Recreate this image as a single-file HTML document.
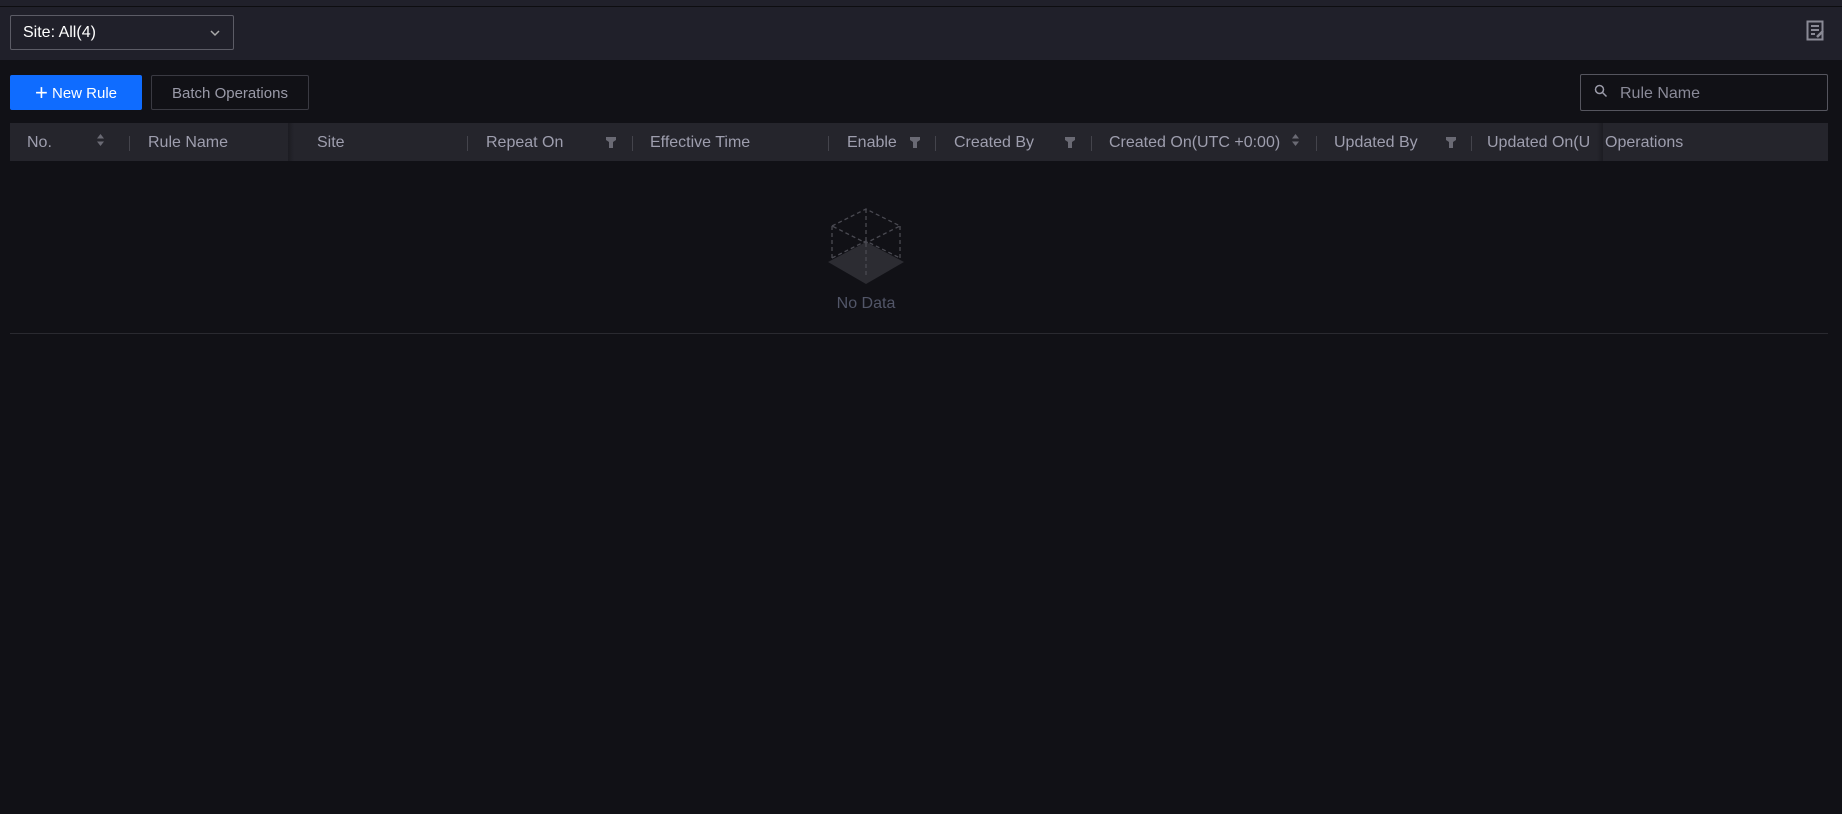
<!DOCTYPE html>
<html><head><meta charset="utf-8"><style>
*{box-sizing:border-box;margin:0;padding:0}
body{width:1842px;height:814px;background:#111116;font-family:"Liberation Sans",sans-serif;position:relative;overflow:hidden}
.abs{position:absolute}
.hdr{left:0;top:0;width:1842px;height:60px;background:#20202a}
.topline{left:0;top:6px;width:1842px;height:1px;background:#0d0d10}
.sel{left:10px;top:15px;width:224px;height:35px;border:1px solid #5c5c66;border-radius:2px;color:#fff;font-size:16px;line-height:33px;padding-left:12px}
.btn{top:75px;height:35px;line-height:35px;font-size:15px;border-radius:2px;text-align:center}
.th{left:10px;top:123px;width:1818px;height:38px;background:#25252c}
.t{position:absolute;top:124px;line-height:38px;font-size:16px;color:#9e9eae;white-space:nowrap}
.sep{position:absolute;top:136px;width:1px;height:15px;background:#44444c}
.flt{position:absolute;top:137px}
.srt{position:absolute;top:133px}
</style></head><body>
<div class="abs hdr"></div>
<div class="abs topline"></div>
<div class="abs sel">Site: All(4)
<svg class="abs" style="left:198px;top:12px" width="12" height="10" viewBox="0 0 12 10"><path d="M2 3l4 4 4-4" stroke="#aaa" stroke-width="1.5" fill="none"/></svg></div>
<svg class="abs" style="left:1806px;top:20px" width="20" height="21" viewBox="0 0 20 21"><rect x="1.5" y="1.5" width="15" height="18" fill="none" stroke="#8a8a96" stroke-width="2"/><path d="M5 6h8M5 10h8M5 14h4" stroke="#8a8a96" stroke-width="2"/><path d="M11 17l6-6" stroke="#8a8a96" stroke-width="2.5"/></svg>

<div class="abs btn" style="left:10px;width:132px;background:#0f6cff;color:#fff"><span style="font-size:22px;vertical-align:-2px">+</span> New Rule</div>
<div class="abs btn" style="left:151px;width:158px;border:1px solid #3a3a42;color:#9a9aa8">Batch Operations</div>
<div class="abs" style="left:1580px;top:74px;width:248px;height:37px;border:1px solid #55555e;border-radius:2px"></div>
<svg class="abs" style="left:1594px;top:84px" width="14" height="14" viewBox="0 0 14 14"><circle cx="5.5" cy="5.5" r="4" stroke="#9a9aa8" stroke-width="1.5" fill="none"/><path d="M8.5 8.5l4 4" stroke="#9a9aa8" stroke-width="1.5"/></svg>
<div class="abs" style="left:1620px;top:75px;line-height:37px;font-size:16px;color:#8a8a98">Rule Name</div>

<div class="abs th"></div>
<div class="abs" style="left:288px;top:123px;width:6px;height:38px;background:linear-gradient(90deg,#1c1c22,#25252c)"></div>
<div class="abs" style="left:1597px;top:123px;width:6px;height:38px;background:linear-gradient(90deg,#25252c,#1c1c22)"></div>
<div class="t" style="left:27px">No.</div>
<div class="t" style="left:148px">Rule Name</div>
<div class="t" style="left:317px">Site</div>
<div class="t" style="left:486px">Repeat On</div>
<div class="t" style="left:650px">Effective Time</div>
<div class="t" style="left:847px">Enable</div>
<div class="t" style="left:954px">Created By</div>
<div class="t" style="left:1109px">Created On(UTC +0:00)</div>
<div class="t" style="left:1334px">Updated By</div>
<div class="t" style="left:1487px;width:102px;overflow:hidden">Updated On(UTC</div>
<div class="t" style="left:1605px">Operations</div>
<div class="sep" style="left:129px"></div><div class="sep" style="left:467px"></div><div class="sep" style="left:632px"></div><div class="sep" style="left:828px"></div><div class="sep" style="left:935px"></div><div class="sep" style="left:1091px"></div><div class="sep" style="left:1316px"></div><div class="sep" style="left:1471px"></div>
<svg class="srt" style="left:96px" width="9" height="14" viewBox="0 0 9 14"><path d="M4.5 1L8 5.5H1zM4.5 13L8 8.5H1z" fill="#6a6a74"/></svg>
<svg class="srt" style="left:1291px" width="9" height="14" viewBox="0 0 9 14"><path d="M4.5 1L8 5.5H1zM4.5 13L8 8.5H1z" fill="#6a6a74"/></svg>
<svg class="flt" style="left:606px" width="10" height="11" viewBox="0 0 10 11"><path d="M0 0h10v3L7 5v6H3V5L0 3z" fill="#6a6a74"/></svg>
<svg class="flt" style="left:910px" width="10" height="11" viewBox="0 0 10 11"><path d="M0 0h10v3L7 5v6H3V5L0 3z" fill="#6a6a74"/></svg>
<svg class="flt" style="left:1065px" width="10" height="11" viewBox="0 0 10 11"><path d="M0 0h10v3L7 5v6H3V5L0 3z" fill="#6a6a74"/></svg>
<svg class="flt" style="left:1446px" width="10" height="11" viewBox="0 0 10 11"><path d="M0 0h10v3L7 5v6H3V5L0 3z" fill="#6a6a74"/></svg>

<svg class="abs" style="left:826px;top:206px" width="80" height="80" viewBox="0 0 80 80">
<path d="M2 56L40 36 78 56 40 78z" fill="#2c2c32"/>
<g stroke="#4a4a52" stroke-width="1.3" stroke-dasharray="4 3" fill="none">
<path d="M6 20L40 3 74 20 40 37zM6 20V52M74 20V52M40 37V72M40 3V35M6 52L40 35 74 52"/>
</g></svg>
<div class="abs" style="left:796px;top:295px;width:140px;text-align:center;font-size:16px;color:#525668">No Data</div>
<div class="abs" style="left:10px;top:333px;width:1818px;height:1px;background:#2a2a30"></div>
</body></html>
